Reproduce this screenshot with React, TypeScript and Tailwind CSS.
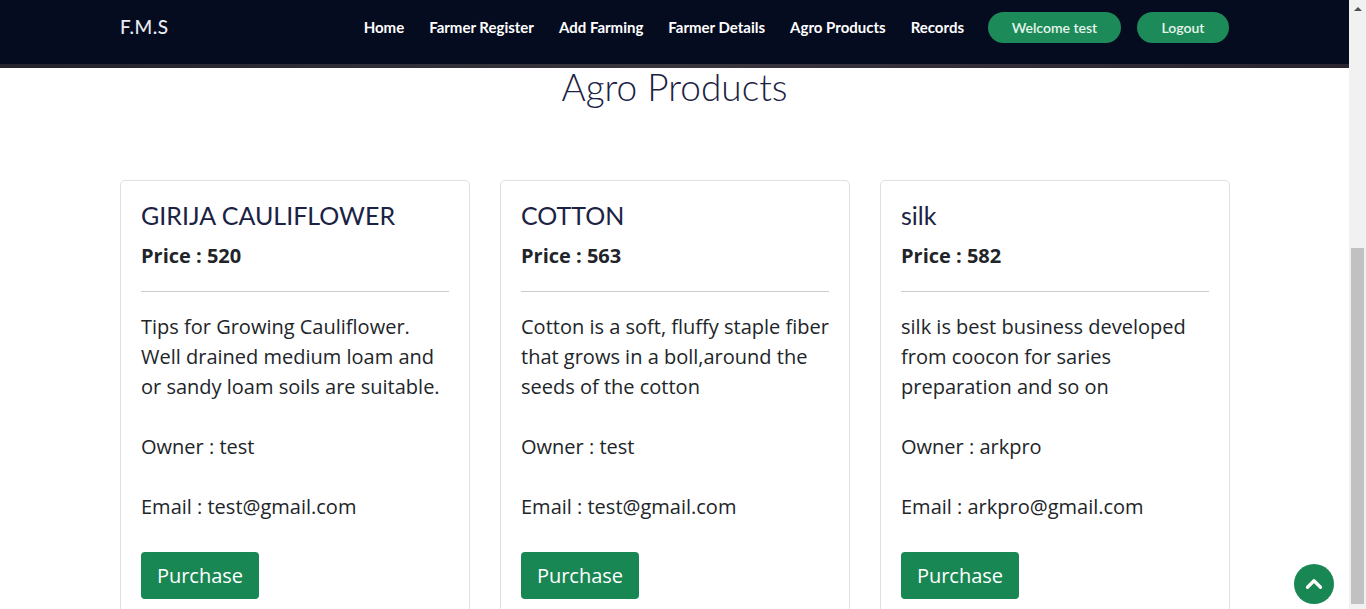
import { ChevronUp } from 'lucide-react';

const products = [
  {
    name: 'GIRIJA CAULIFLOWER',
    price: 520,
    desc: 'Tips for Growing Cauliflower. Well drained medium loam and or sandy loam soils are suitable.',
    owner: 'test',
    email: 'test@gmail.com',
  },
  {
    name: 'COTTON',
    price: 563,
    desc: 'Cotton is a soft, fluffy staple fiber that grows in a boll,around the seeds of the cotton',
    owner: 'test',
    email: 'test@gmail.com',
  },
  {
    name: 'silk',
    price: 582,
    desc: 'silk is best business developed from coocon for saries preparation and so on',
    owner: 'arkpro',
    email: 'arkpro@gmail.com',
  },
];

const navLinks = ['Home', 'Farmer Register', 'Add Farming', 'Farmer Details', 'Agro Products', 'Records'];

export default function App() {
  return (
    <div className="flex h-[609px] w-full overflow-hidden bg-white">
      <div className="relative flex-1 overflow-hidden">
        {/* Header */}
        <header className="bg-[#060c20]">
          <div className="flex h-[64px] items-start justify-between px-[120px] pt-[12px]">
            <div className="mt-[1px] font-['Lato',sans-serif] text-[19px] font-medium tracking-[0.5px] text-[#e8ebf2]">
              F.M.S
            </div>
            <nav className="flex items-center font-['Lato',sans-serif] text-[15px] font-bold text-white">
              <div className="flex items-center gap-[25px]">
                {navLinks.map((l) => (
                  <a key={l} href="#" className="whitespace-nowrap">
                    {l}
                  </a>
                ))}
              </div>
              <a
                href="#"
                className="ml-[24px] flex h-[31px] w-[133px] items-center justify-center rounded-full bg-[#1d8a59] text-[14px] font-semibold text-[#e6f5ec]"
              >
                Welcome test
              </a>
              <a
                href="#"
                className="ml-[16px] flex h-[31px] w-[92px] items-center justify-center rounded-full bg-[#1d8a59] text-[14px] font-semibold text-[#e6f5ec]"
              >
                Logout
              </a>
            </nav>
          </div>
          <div className="h-[4px] bg-gradient-to-r from-[#24242c] via-[#3a363e] to-[#2a2530]"></div>
        </header>

        {/* Title */}
        <h1 className="mt-[-1px] text-center font-['Lato',sans-serif] text-[37px] font-light leading-[40px] text-[#1b2244]">
          Agro Products
        </h1>

        {/* Cards */}
        <div className="mt-[73px] grid grid-cols-[350px_350px_350px] gap-[30px] px-[120px] font-['Open_Sans',sans-serif] text-[#212529]">
          {products.map((p) => (
            <div key={p.name} className="h-[460px] rounded-[5px] border border-[#dfdfdf] px-[20px] pt-[19px]">
              <h2 className="font-['Lato',sans-serif] text-[25px] font-normal leading-[30px] text-[#1b2244]">
                {p.name}
              </h2>
              <p className="mt-[11px] text-[20px] font-bold leading-[30px]">Price : {p.price}</p>
              <hr className="mt-[20px] border-t border-[#cccccc]" />
              <p className="mr-[-2px] mt-[20px] text-[20px] leading-[30px]">{p.desc}</p>
              <p className="mt-[30px] text-[20px] leading-[30px]">Owner : {p.owner}</p>
              <p className="mt-[30px] text-[20px] leading-[30px]">Email : {p.email}</p>
              <button className="mt-[30px] h-[47px] w-[118px] rounded-[4px] bg-[#198754] text-[20px] text-white">
                Purchase
              </button>
            </div>
          ))}
        </div>

        {/* Back to top */}
        <a
          href="#"
          className="absolute bottom-[5px] right-[15px] flex h-[40px] w-[40px] items-center justify-center rounded-full bg-[#198754] text-white"
        >
          <ChevronUp size={26} strokeWidth={3} />
        </a>
      </div>

      {/* Scrollbar */}
      <div className="flex w-[17px] flex-col bg-[#f1f1f1]">
        <div className="flex h-[17px] items-center justify-center">
          <div className="h-0 w-0 border-x-[4px] border-b-[4px] border-x-transparent border-b-[#505050]"></div>
        </div>
        <div className="mx-[2px] mt-[231px] h-[356px] bg-[#c1c1c1]"></div>
      </div>
    </div>
  );
}
